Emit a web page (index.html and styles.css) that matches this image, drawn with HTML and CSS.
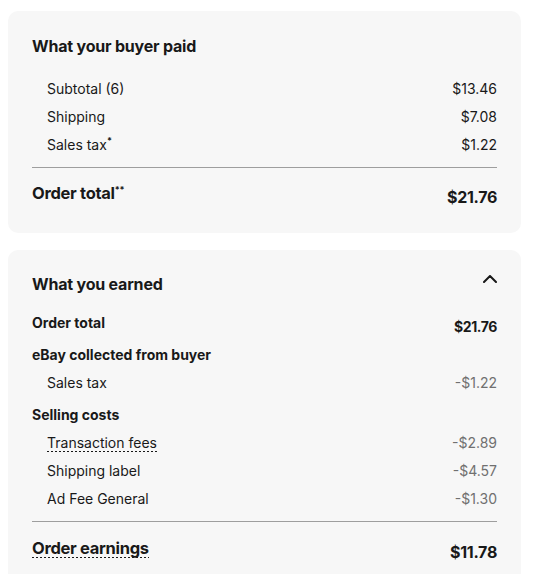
FILE: index.html
```html
<!DOCTYPE html>
<html lang="en">
<head>
<meta charset="utf-8">
<title>Order summary</title>
<link rel="stylesheet" href="styles.css">
</head>
<body>
<div class="page">
  <section class="card">
    <div class="card-head">
      <h2 class="title">What your buyer paid</h2>
    </div>
    <div class="row sub first">
      <span>Subtotal (6)</span><span>$13.46</span>
    </div>
    <div class="row sub">
      <span>Shipping</span><span>$7.08</span>
    </div>
    <div class="row sub">
      <span>Sales tax<sup class="mark">*</sup></span><span>$1.22</span>
    </div>
    <hr class="sep">
    <div class="total">
      <span class="total-label">Order total<sup class="mark">**</sup></span>
      <span class="total-value">$21.76</span>
    </div>
  </section>

  <section class="card earned">
    <div class="card-head">
      <h2 class="title">What you earned</h2>
      <svg class="chevron" width="14" height="8" viewBox="0 0 14 8" aria-hidden="true">
        <polyline points="1,7 7,1 13,7" fill="none" stroke="#191919" stroke-width="2" stroke-linecap="round" stroke-linejoin="round"/>
      </svg>
    </div>
    <div class="row bold tall">
      <span>Order total</span><span class="bold-value">$21.76</span>
    </div>
    <div class="row bold">
      <span>eBay collected from buyer</span>
    </div>
    <div class="row sub">
      <span>Sales tax</span><span class="neg">-$1.22</span>
    </div>
    <div class="row bold gap">
      <span>Selling costs</span>
    </div>
    <div class="row sub">
      <span class="dotted">Transaction fees</span><span class="neg">-$2.89</span>
    </div>
    <div class="row sub">
      <span>Shipping label</span><span class="neg">-$4.57</span>
    </div>
    <div class="row sub">
      <span>Ad Fee General</span><span class="neg">-$1.30</span>
    </div>
    <hr class="sep">
    <div class="total">
      <span class="total-label dotted">Order earnings</span>
      <span class="total-value">$11.78</span>
    </div>
  </section>
</div>
</body>
</html>
```

FILE: styles.css
```css
* {
  box-sizing: border-box;
}

html, body {
  margin: 0;
  padding: 0;
  background: #ffffff;
}

body {
  font-family: "Inter", "Liberation Sans", Arial, sans-serif;
  color: #191919;
  font-size: 14px;
}

.page {
  padding: 11px 15px 0 8px;
  display: flex;
  flex-direction: column;
  gap: 17px;
}

.card {
  width: 513px;
  background: #f7f7f7;
  border-radius: 10px;
  padding: 23px 24px 24px 24px;
}

.card.earned {
  padding-top: 22px;
}

.card-head {
  display: flex;
  justify-content: space-between;
  align-items: flex-start;
}

.title {
  margin: 0;
  font-size: 16px;
  line-height: 24px;
  font-weight: 700;
  letter-spacing: -0.2px;
}

.chevron {
  display: block;
  margin-top: 3px;
}

.row {
  display: flex;
  justify-content: space-between;
  align-items: flex-start;
  line-height: 28px;
  font-size: 14px;
}

.row.sub {
  padding-left: 15px;
}

.row.first {
  margin-top: 17px;
}

.row.bold {
  font-weight: 700;
}

.row.tall {
  margin-top: 13px;
}

.row.gap {
  margin-top: 4px;
}

.bold-value {
  padding-top: 4px;
  letter-spacing: -0.4px;
}

.neg {
  color: #707070;
}

.mark {
  font-size: 9px;
  font-weight: 700;
  line-height: 0;
  vertical-align: 6px;
}

.dotted {
  background-image: repeating-linear-gradient(to right, #191919 0 2px, transparent 2px 4px);
  background-size: 100% 1px;
  background-position: 0 calc(100% - 5px);
  background-repeat: no-repeat;
}

.total-label.dotted {
  background-position: 0 calc(100% - 2px);
}

.sep {
  margin: 8px 0 0 0;
  border: 0;
  border-top: 1px solid #9e9e9e;
  height: 0;
}

.total {
  display: flex;
  justify-content: space-between;
  align-items: flex-start;
  margin-top: 13px;
  font-weight: 700;
}

.earned .total {
  margin-top: 14px;
}

.total-label {
  font-size: 16.5px;
  line-height: 24px;
  letter-spacing: -0.3px;
}

.total-value {
  font-size: 16px;
  line-height: 24px;
  padding-top: 4px;
  letter-spacing: -0.3px;
}
```
